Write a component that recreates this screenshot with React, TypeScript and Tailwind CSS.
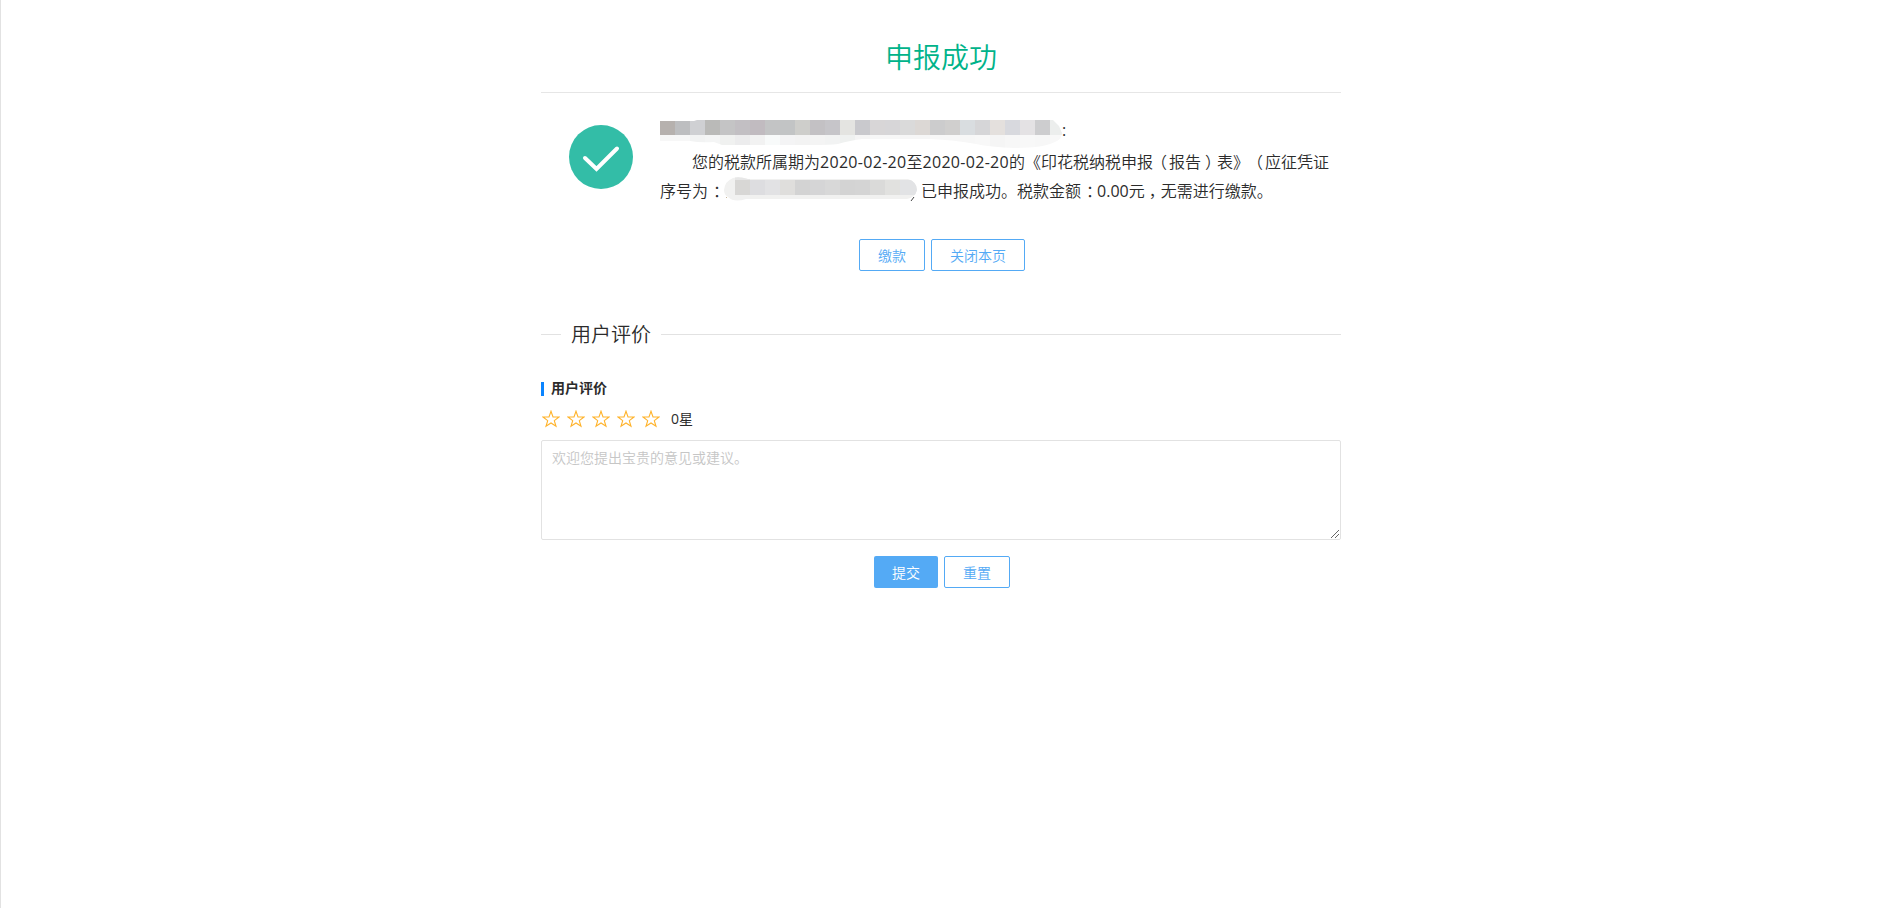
import React from "react";

const nameBlocks = [
  "#b6b1ae", "#bdbec0", "#cfd0d3", "#babab8", "#c4c4c5", "#c2bfc3", "#c1bbc0", "#c3c4c5", "#c2c4c5",
  "#cececb", "#c3c1c4", "#c6c5c9", "#e4e4e1", "#c9c9cd", "#d8d6d7", "#d7d6d8", "#dadada", "#dcd8d5",
  "#cccccd", "#d0cfce", "#d9dde0", "#d6d6d8", "#e4e0dd", "#d8d9de", "#e4e2e4", "#cdcdcf", "#eceeed",
];

const nameShades = [
  "#f7f7f7", "#f7f7f7", "#f2f3f3", "#f4f5f5", "#f0f1f0", "#ececed", "#f2f2f2", "#f8fafa", "#f4f4f5",
  "#f3f3f3", "#f4f4f4", "#f2f3f3", "#eff1f0", "#f5f5f5", "#f7f7f7", "#f7f7f7", "#f6f6f6", "#f6f6f6",
  "#f7f7f7", "#f7f7f7", "#f7f7f7", "#f8f8f8", "#f5f5f5", "#f7f7f7", "#f8f8f8", "#f7f7f7", "#f8f8f8",
];

const numberBlocks = [
  "#d8d7d5", "#dddde0", "#e2e2e4", "#dfdedc", "#d3d3d3", "#d5d5d6", "#d8d8d8", "#d3d3d3", "#d4d4d4",
  "#dadad9", "#e1e1df", "#e2e3e5",
];

/* Masked taxpayer name */
const MaskedName = () => (
  <svg className="block h-[34px] w-[402px] shrink-0" viewBox="0 0 402 34" shapeRendering="crispEdges">
    <clipPath id="name">
      <path d="M0 1H34L37 0H393L399 6L402 13Q402 18 397 21Q385 28 355 28Q330 27 316 24Q295 20 270 19H202Q188 21 178 24Q170 25 150 25H62L54 22Q40 23 30 21H0Z" />
    </clipPath>
    <g clipPath="url(#name)">
      {nameShades.map((fill, i) => (
        <rect key={i} x={i * 15} y="15" width="15" height="15" fill={fill} />
      ))}
      {nameBlocks.map((fill, i) => (
        <rect key={i} x={i * 15} y="0" width="15" height="15" fill={fill} />
      ))}
    </g>
  </svg>
);

/* Masked voucher number */
const MaskedNumber = () => (
  <svg className="inline-block h-[24px] w-[197px] align-top" viewBox="0 0 197 24" shapeRendering="crispEdges">
    <clipPath id="number">
      <path d="M0 13Q1 4 9 1Q15 -1 24 2H184Q193 5 193 13Q191 21 183 22H22Q10 26 4 20Q0 18 0 13Z" />
    </clipPath>
    <g clipPath="url(#number)">
      <rect width="193" height="24" fill="#f1f1f0" />
      <rect x="11" width="15" height="3" fill="#e7e7e7" />
      {numberBlocks.map((fill, i) => (
        <rect key={i} x={11 + i * 15} y="3" width={i === 11 ? 17 : 15} height="15" fill={fill} />
      ))}
    </g>
    <path d="M187 24l3-4" stroke="#444" shapeRendering="auto" />
    <path d="M2 20h1" stroke="#c8b89c" />
  </svg>
);

const StarIcon = () => (
  <svg className="h-[18px] w-[18px]" viewBox="0 0 18 18" fill="none" stroke="#ffb32b" strokeWidth="1.1">
    <path d="M9 1.2L11 6.9L17 7L12.3 10.6L14 16.3L9 13L4 16.3L5.7 10.6L1 7L7 6.9Z" />
  </svg>
);

type ButtonProps = {
  label: string;
  primary?: boolean;
};

const Button: React.FC<ButtonProps> = ({ label, primary }) => (
  <button
    className={`h-8 rounded-[2px] px-[18px] text-sm ${
      primary ? "bg-[#54aaf5] pt-0.5 leading-[30px] text-white" : "border border-[#54aaf5] bg-white leading-8 text-[#54aaf5]"
    }`}
  >
    {label}
  </button>
);

const App: React.FC = () => {
  return (
    <div className="min-h-screen border-l border-[#e2e2e2] bg-white font-['Open_Sans','Noto_Sans_CJK_SC',sans-serif] font-[350] text-[#2b2b2b] [text-spacing-trim:space-all]">
      <div className="mx-auto w-[800px]">
        {/* Title */}
        <h1 className="h-[93px] border-b border-[#e6e6e6] pt-[37px] text-center text-[28px] leading-10 font-[350] text-[#00b38a]">
          申报成功
        </h1>

        {/* Result */}
        <div className="flex h-[146px] pt-[27px]">
          <svg className="ml-7 mt-[5px] h-16 w-16 shrink-0" viewBox="0 0 64 64" fill="none">
            <circle cx="32" cy="32" r="32" fill="#33bda7" />
            <path
              d="M16 33L27.5 44L48 23.5"
              stroke="#fff"
              strokeWidth="4"
              strokeLinecap="round"
            />
          </svg>
          <div className="ml-[27px] flex-1 text-base leading-[30px]">
            <div className="flex h-[27px]">
              <MaskedName />
              <span className="-mt-[5px] font-normal">:</span>
            </div>
            <p className="whitespace-nowrap pl-8">
              您的税款所属期为<span className="font-normal tracking-[0.3px]">2020-02-20</span>至
              <span className="font-normal tracking-[0.3px]">2020-02-20</span>的《印花税纳税申报
              <span className="-ml-[2px] mr-[2px]">（</span>报告
              <span className="ml-[4px] tracking-[-4px]">）</span>表》
              <span className="-ml-[2px] mr-[2px]">（</span>应征凭证
            </p>
            <p className="whitespace-nowrap leading-[29px]">
              序号为<span className="ml-[5px] tracking-[-5px]">：</span>
              <MaskedNumber />
              已申报成功。税款金额<span className="ml-[5px] tracking-[-5px]">：</span>
              <span className="font-normal">0.00</span>元<span className="ml-[4px] tracking-[-4px]">，</span>无需进行缴款。
            </p>
          </div>
        </div>

        <div className="flex justify-center gap-1.5 pl-0.5">
          <Button label="缴款" />
          <Button label="关闭本页" />
        </div>

        {/* Section heading */}
        <div className="mt-12 flex h-[30px] items-center">
          <div className="h-px w-5 bg-[#e2e2e2]" />
          <h2 className="px-2.5 pt-0.5 text-xl leading-[30px] font-[350]">用户评价</h2>
          <div className="h-px flex-1 bg-[#e2e2e2]" />
        </div>

        {/* Rating */}
        <div className="mt-8 flex h-4 items-center">
          <div className="h-3.5 w-[3px] bg-[#0a84ff]" />
          <h3 className="ml-[7px] pb-0.5 text-sm leading-4 font-bold">用户评价</h3>
        </div>
        <div className="mt-3 flex h-5 items-center pl-px">
          <div className="flex gap-[7px]">
            {[1, 2, 3, 4, 5].map((n) => (
              <StarIcon key={n} />
            ))}
          </div>
          <span className="ml-[11px] text-sm font-normal">0星</span>
        </div>
        <div className="relative mt-[11px]">
          <textarea
            className="block h-[100px] w-full resize-none rounded-[2px] border border-[#e2e2e2] px-2.5 py-[7px] text-sm placeholder:text-[#c6c6c6]"
            placeholder="欢迎您提出宝贵的意见或建议。"
          />
          <svg className="absolute right-0.5 bottom-0.5 h-2 w-2" viewBox="0 0 8 8" stroke="#555" strokeWidth="0.9">
            <path d="M0 8L8 0M4 8L8 4" />
          </svg>
        </div>
        <div className="mt-4 flex justify-center gap-1.5 pl-0.5">
          <Button label="提交" primary />
          <Button label="重置" />
        </div>
      </div>
    </div>
  );
};

export default App;
